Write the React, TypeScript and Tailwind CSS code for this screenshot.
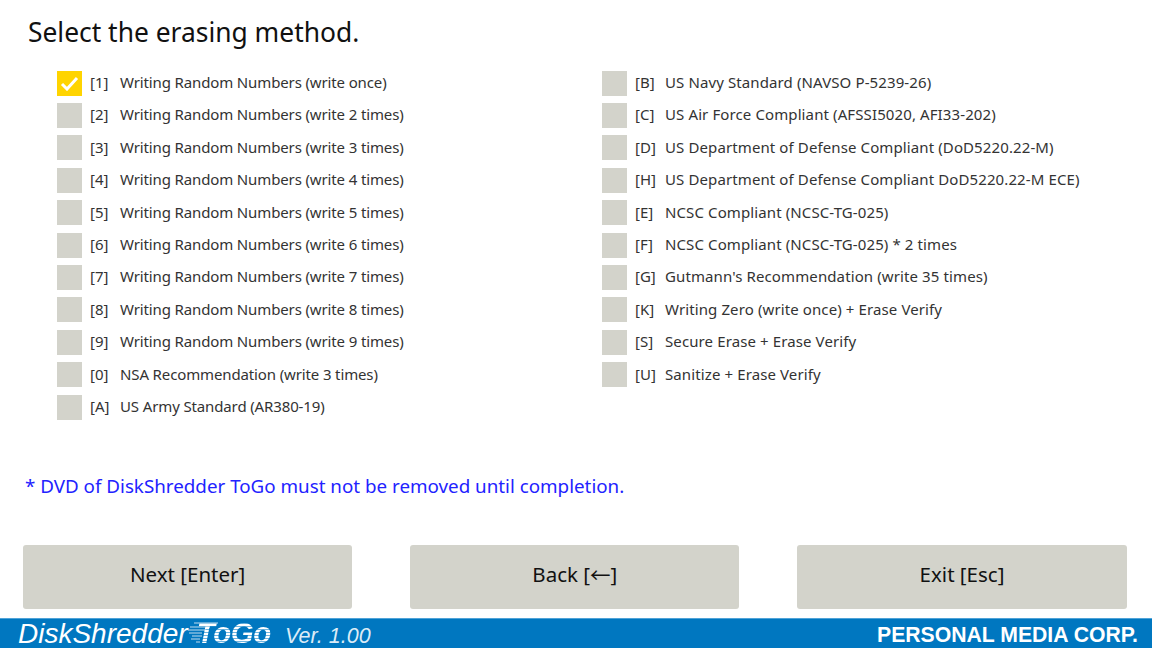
const left = [
  ["[1]", "Writing Random Numbers (write once)"],
  ["[2]", "Writing Random Numbers (write 2 times)"],
  ["[3]", "Writing Random Numbers (write 3 times)"],
  ["[4]", "Writing Random Numbers (write 4 times)"],
  ["[5]", "Writing Random Numbers (write 5 times)"],
  ["[6]", "Writing Random Numbers (write 6 times)"],
  ["[7]", "Writing Random Numbers (write 7 times)"],
  ["[8]", "Writing Random Numbers (write 8 times)"],
  ["[9]", "Writing Random Numbers (write 9 times)"],
  ["[0]", "NSA Recommendation (write 3 times)"],
  ["[A]", "US Army Standard (AR380-19)"],
];
const right = [
  ["[B]", "US Navy Standard (NAVSO P-5239-26)"],
  ["[C]", "US Air Force Compliant (AFSSI5020, AFI33-202)"],
  ["[D]", "US Department of Defense Compliant (DoD5220.22-M)"],
  ["[H]", "US Department of Defense Compliant DoD5220.22-M ECE)"],
  ["[E]", "NCSC Compliant (NCSC-TG-025)"],
  ["[F]", "NCSC Compliant (NCSC-TG-025) * 2 times"],
  ["[G]", "Gutmann's Recommendation (write 35 times)"],
  ["[K]", "Writing Zero (write once) + Erase Verify"],
  ["[S]", "Secure Erase + Erase Verify"],
  ["[U]", "Sanitize + Erase Verify"],
];

function Row({ k, label, checked }: { k: string; label: string; checked?: boolean }) {
  return (
    <div className="flex h-[32.4px] items-center">
      <div className={`flex h-[25px] w-[25px] items-center justify-center ${checked ? "bg-[#ffd400]" : "bg-[#d3d3cb]"}`}>
        {checked && (
          <svg width="19" height="15" viewBox="0 0 19 15" fill="none">
            <path d="M2 8l5 5L17 2" stroke="#fff" strokeWidth="3" />
          </svg>
        )}
      </div>
      <span className="ml-2 w-[30px] pb-[1.4px] tracking-normal text-[#333]">{k}</span>
      <span className="pb-[1.4px]">{label}</span>
    </div>
  );
}

function Btn({ children }: { children: React.ReactNode }) {
  return (
    <div className="flex h-[64px] w-[329.3px] items-center justify-center rounded-[3px] bg-[#d3d3cb] pb-1 text-[20.5px] text-[#111]">
      {children}
    </div>
  );
}

export default function App() {
  return (
    <div className="flex h-[648px] w-[1152px] flex-col overflow-hidden bg-white font-['Noto_Sans',sans-serif]">
      <h1 className="ml-[28px] mt-[14px] h-[37px] text-[26.4px] leading-[37px] text-[#111]">Select the erasing method.</h1>
      <div className="ml-[57px] mt-[16px] flex text-[15px] leading-none text-[#333]">
        <div className="w-[545px] tracking-[-0.13px]">
          {left.map(([k, l], i) => (
            <Row key={k} k={k} label={l} checked={i === 0} />
          ))}
        </div>
        <div className="tracking-[0.11px]">
          {right.map(([k, l]) => (
            <Row key={k} k={k} label={l} />
          ))}
        </div>
      </div>
      <p className="ml-[25px] mt-[48.5px] h-[28px] text-[18.8px] leading-[28px] text-[#2222ff]">
        * DVD of DiskShredder ToGo must not be removed until completion.
      </p>
      <div className="ml-[23px] mt-[45px] flex gap-[57.9px]">
        <Btn>Next [Enter]</Btn>
        <Btn>
          Back [<span className="font-['Noto_Sans_CJK_JP',sans-serif]">←</span>]
        </Btn>
        <Btn>Exit [Esc]</Btn>
      </div>
      <div className="mt-[9px] flex h-[30px] items-center justify-between border-t border-[#4fa3d8] bg-[#0077c0] pl-[18px] pr-[14px] pt-[3px] text-white">
        <div className="flex items-baseline font-['Liberation_Sans',sans-serif] italic">
          <span className="text-[28px] leading-[30px]">DiskShredder</span>
          <span className="relative ml-[9px] bg-[repeating-linear-gradient(180deg,#ffffff_0px,#ffffff_2px,#6fb4de_2px,#6fb4de_3px)] bg-clip-text text-[29.5px] leading-[30px] font-bold tracking-[-0.4px] text-transparent">
            ToGo
            <svg className="absolute left-[-9px] top-[2px]" width="30" height="26" viewBox="0 0 30 26" fill="none" stroke="#ffffff">
              <path d="M6 3H30M2 7H22M0 10H18M1 13H14M4 16H14M3 19H12M8 22H12" strokeWidth="1" opacity="0.75" />
            </svg>
          </span>
          <span className="ml-[14px] text-[21.5px] leading-[30px] text-[#dcecf7]">Ver. 1.00</span>
        </div>
        <span className="font-['Liberation_Sans',sans-serif] text-[21.2px] font-bold leading-[30px]">PERSONAL MEDIA CORP.</span>
      </div>
    </div>
  );
}
